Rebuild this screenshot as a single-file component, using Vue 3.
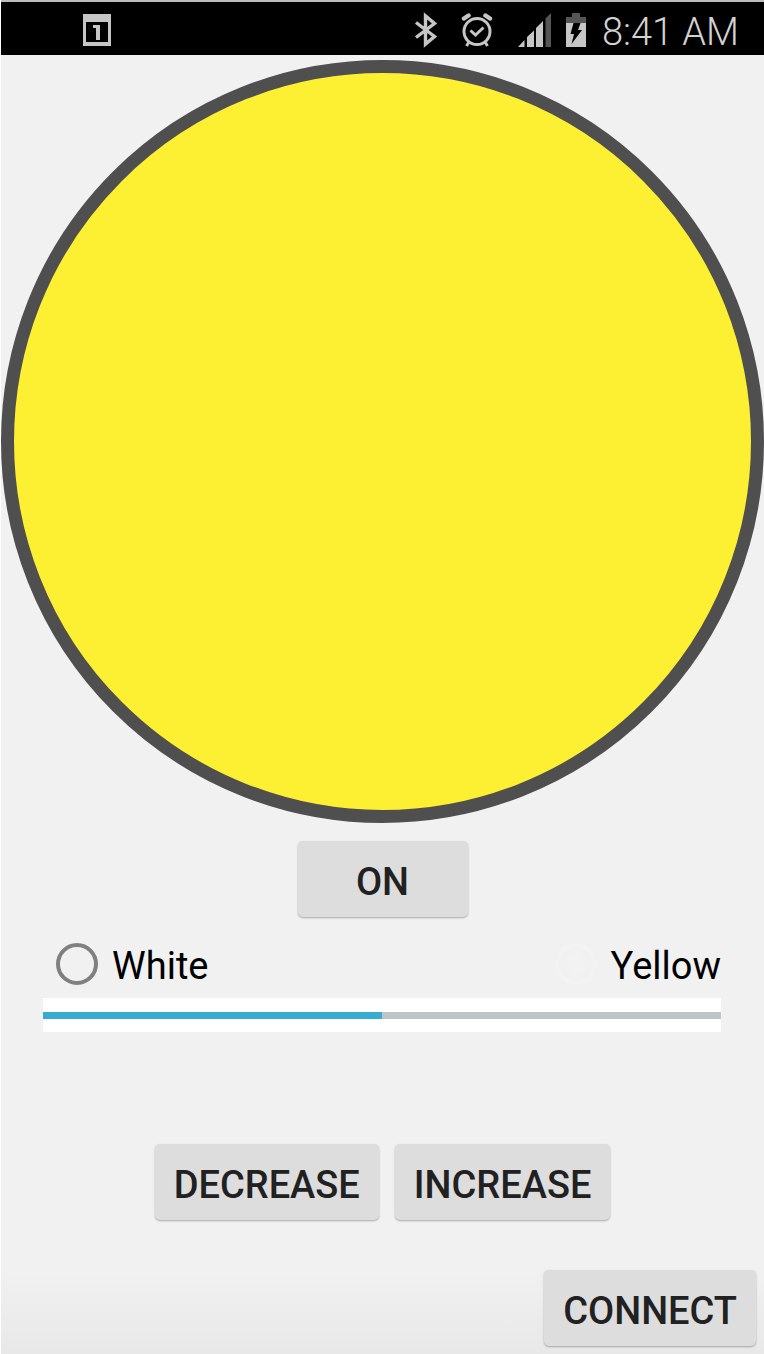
<script setup>
import { ref } from 'vue'

const on = ref(true)
const color = ref('yellow')
const level = ref(50)
const connected = ref(false)

function step(amount) {
  level.value = Math.min(100, Math.max(0, level.value + amount))
}
</script>

<template>
  <main class="screen">
    <header class="status">
      <svg class="calendar" width="30" height="34" viewBox="0 0 30 34" aria-hidden="true">
        <path fill="#c6c6c6" fill-rule="evenodd" d="M1 1h28v32H1zM4 9v20h22V9z" />
        <path fill="#c6c6c6" d="M11 12h7v15h-4V15h-3z" />
      </svg>
      <svg class="bluetooth" width="24" height="36" viewBox="0 0 24 36" aria-hidden="true">
        <path fill="none" stroke="#c6c6c6" stroke-width="3.4" d="M2 10.500L20.500 24.500L11.500 32V4L20.500 11.500L2 25.500" />
      </svg>
      <svg class="alarm" width="32" height="36" viewBox="0 0 32 36" aria-hidden="true">
        <g fill="none" stroke="#c6c6c6">
          <circle cx="16" cy="19.500" r="13" stroke-width="3" />
          <path stroke-width="4.500" stroke-linecap="round" d="M3 6.500L7.500 3.500M29 6.500L24.500 3.500" />
          <path stroke-width="3" d="M9.500 18.500L14.500 23L22.500 15.500M8 30L5.500 34M24 30L26.500 34" />
        </g>
      </svg>
      <svg class="signal" width="34" height="36" viewBox="0 0 34 36" aria-hidden="true">
        <path fill="#c6c6c6" d="M0 35L6.500 28V35zM9 25L16 18.500V35H9zM18 16L25 9V35H18z" />
        <path fill="#555" d="M27.500 6.500L33 1V35H27.500z" />
      </svg>
      <svg class="battery" width="22" height="36" viewBox="0 0 22 36" aria-hidden="true">
        <path fill="#555" d="M7 1H15V5H21V12H1V5H7z" />
        <path fill="#c6c6c6" d="M1 11H21V35H1z" />
        <path fill="#000" d="M8.500 11H15.500L13 18H17L6.500 32L9 22H5.500z" />
      </svg>
      <time class="clock">8:41 AM</time>
    </header>

    <div class="lamp" :class="[color, { off: !on }]"></div>

    <button class="btn power" type="button" @click="on = !on">ON</button>

    <div class="settings">
      <div class="options">
        <label class="option">
          <input v-model="color" class="radio" type="radio" name="color" value="white">
          <span class="name">White</span>
        </label>
        <label class="option">
          <input v-model="color" class="radio" type="radio" name="color" value="yellow">
          <span class="name">Yellow</span>
        </label>
      </div>
      <div class="meter">
        <progress class="bar" :value="level" max="100" aria-label="Brightness"></progress>
      </div>
    </div>

    <div class="steps">
      <button class="btn" type="button" @click="step(-10)">DECREASE</button>
      <button class="btn" type="button" @click="step(10)">INCREASE</button>
    </div>

    <button class="btn connect" type="button" @click="connected = !connected">CONNECT</button>
  </main>
</template>

<style>
body {
  margin: 0;
}
</style>

<style scoped>
.screen {
  box-sizing: border-box;
  min-height: 100vh;
  display: flex;
  flex-direction: column;
  padding-bottom: 8px;
  border-left: 1px solid #fff;
  background: linear-gradient(to top, #e8e8e8, #f1f1f1 84px);
  font-family: Roboto, "Liberation Sans", sans-serif;
  color: #000;
}

.status {
  box-sizing: border-box;
  height: 55px;
  display: flex;
  align-items: center;
  padding: 2px 25px 0 81px;
  border-top: 2px solid #b9bdbe;
  background: #000;
}

.status svg {
  flex: none;
}

.calendar {
  margin-right: auto;
}

.bluetooth {
  margin-right: 23px;
}

.alarm {
  margin-right: 25px;
}

.signal {
  margin-right: 13px;
}

.battery {
  margin-right: 15px;
}

.clock {
  padding-top: 4px;
  font-size: 38px;
  font-weight: 300;
  line-height: 48px;
  color: #d2d2d2;
  white-space: nowrap;
}

.lamp {
  box-sizing: border-box;
  aspect-ratio: 1;
  margin-top: 5px;
  border: 13px solid #4f4f4f;
  border-radius: 50%;
}

.lamp.yellow {
  background: #fdef32;
}

.lamp.white {
  background: #fff;
}

.lamp.off {
  background: #222;
}

.btn {
  height: 76px;
  padding: 6px 19px 0;
  border: 0;
  border-radius: 5px;
  background: #ddd;
  box-shadow: 0 1px 2px rgba(0, 0, 0, 0.3);
  font-family: inherit;
  font-size: 38px;
  font-weight: 500;
  line-height: 48px;
  color: #212121;
  cursor: pointer;
}

.power {
  align-self: center;
  min-width: 170px;
  margin-top: 18px;
}

.settings {
  margin: 21px 43px 0 42px;
}

.options {
  display: flex;
  justify-content: space-between;
  padding-left: 13px;
}

.option {
  display: flex;
  align-items: center;
  gap: 14px;
  height: 52px;
  font-size: 38px;
  line-height: 48px;
}

.name {
  padding-top: 4px;
}

.radio {
  appearance: none;
  box-sizing: border-box;
  width: 42px;
  height: 42px;
  margin: 0;
  border: 4px solid #808080;
  border-radius: 50%;
}

.radio:checked {
  border-color: #f3f3f3;
  background: radial-gradient(circle, #f2f2f2 8px, transparent 9px);
}

.meter {
  display: flex;
  align-items: center;
  height: 34px;
  margin-top: 8px;
  background: #fff;
}

.bar {
  appearance: none;
  display: block;
  width: 100%;
  height: 7px;
  border: 0;
  background: #bdc5c9;
}

.bar::-webkit-progress-bar {
  background: #bdc5c9;
}

.bar::-webkit-progress-value {
  background: #37abd0;
}

.steps {
  display: flex;
  justify-content: center;
  gap: 16px;
  margin-top: 112px;
}

.connect {
  align-self: flex-end;
  margin: auto 8px 0 0;
}
</style>
